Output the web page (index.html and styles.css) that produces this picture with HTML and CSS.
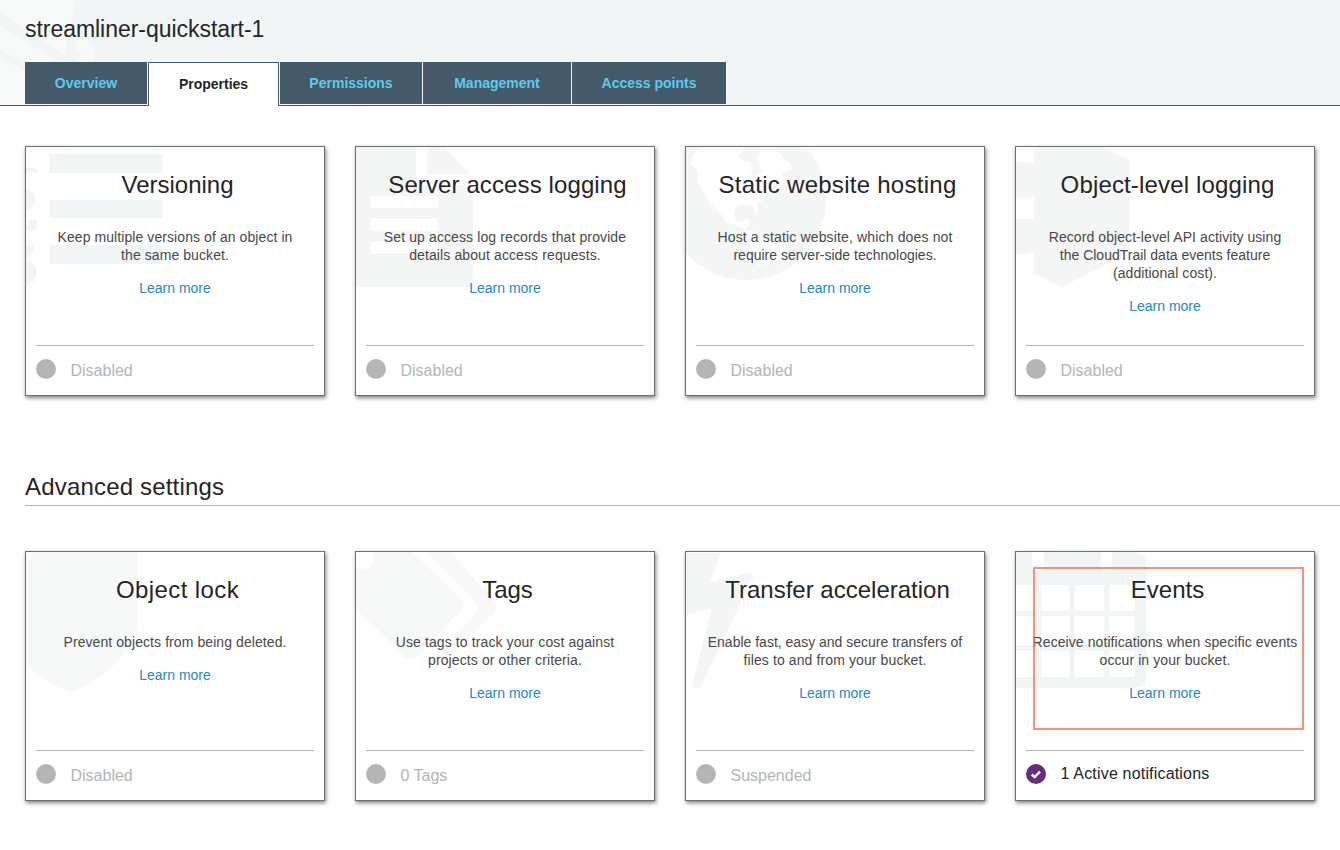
FILE: index.html
```html
<!DOCTYPE html>
<html lang="en">
<head>
<meta charset="utf-8">
<title>streamliner-quickstart-1</title>
<link rel="stylesheet" href="styles.css">
</head>
<body>
<header class="header">
  <svg class="header-mark" viewBox="0 0 330 315"><path d="M0 0H225L195 165Q180 160 165 148L0 37ZM0 75L150 172Q172 184 200 186H75V190L0 150ZM0 176L75 212V315H0Z"/><path d="M228 140Q226 116 248 114Q288 120 285 186H225Q240 178 243 160Q230 156 228 140Z"/></svg>
  <h1 class="bucket">streamliner-quickstart-1</h1>
  <nav class="tabs">
    <a class="tab t1">Overview</a>
    <a class="tab t2 active">Properties</a>
    <a class="tab t3">Permissions</a>
    <a class="tab t4">Management</a>
    <a class="tab t5">Access points</a>
  </nav>
</header>
<main class="main">
  <section class="cards">
    <article class="card">
      <svg class="mark dark" viewBox="33 36 450 450"><rect x="102" y="57" width="340" height="57" rx="6"/><rect x="102" y="194" width="340" height="56" rx="6"/><rect x="102" y="331" width="340" height="56" rx="6"/><path d="M33 98H66V113H33ZM33 163Q62 167 61 195Q60 215 33 230ZM39 255H66V285H33V270H39ZM33 331H60Q54 356 36 372Q64 382 64 413Q62 443 33 454V384L38 376L33 372Z"/></svg>
      <h2 class="title">Versioning</h2>
      <p class="desc">Keep multiple versions of an object in<br>the same bucket.</p>
      <a class="link">Learn more</a>
      <footer class="status"><span class="dot"></span>Disabled</footer>
    </article>
    <article class="card">
      <svg class="mark" viewBox="33 36 450 450"><path fill-rule="evenodd" d="M33 36H213V131Q213 150 232 150H384V456H33ZM247 36H297Q335 72 373 117H247ZM85 183Q75 183 75 193V209Q75 219 85 219H270Q280 219 280 209V193Q280 183 270 183ZM85 252Q75 252 75 262V277Q75 287 85 287H270Q280 287 280 277V262Q280 252 270 252ZM85 320Q75 320 75 330V344Q75 354 85 354H270Q280 354 280 344V330Q280 320 270 320Z"/></svg>
      <h2 class="title ls-1">Server access logging</h2>
      <p class="desc ls-1">Set up access log records that provide<br>details about access requests.</p>
      <a class="link">Learn more</a>
      <footer class="status"><span class="dot"></span>Disabled</footer>
    </article>
    <article class="card">
      <svg class="mark" viewBox="33 36 450 450"><circle cx="213" cy="195" r="240"/><path class="land" d="M62 50L88 36H205L192 62L206 80H226L233 100L226 116L238 128L250 116L262 114L256 90L246 68L256 50L285 49L318 54L326 72L352 92L346 106L316 113L336 132L314 142L296 156L270 180L263 196L244 208L250 226L244 234L232 212L206 210L182 216L176 240L186 258L202 262L212 252H222L219 272L211 286L200 278L176 268L147 262L145 246L106 204L119 240L98 196L84 170L68 142V108L45 86Z"/><path class="land" d="M211 286L239 290L256 310H300L340 336L330 362L280 386L247 391L246 350L222 326Z"/></svg>
      <h2 class="title ls-3">Static website hosting</h2>
      <p class="desc"><span class="ls-2">Host a static website, which does not</span><br><span class="ls-0">require server-side technologies.</span></p>
      <a class="link">Learn more</a>
      <footer class="status"><span class="dot"></span>Disabled</footer>
    </article>
    <article class="card">
      <svg class="mark" viewBox="33 36 450 450"><path d="M87 36H291L373 77V352L171 456L87 416V350L45 361L33 358V252H87V188H33V77L87 87Z"/></svg>
      <h2 class="title ls-2">Object-level logging</h2>
      <p class="desc">Record object-level API activity using<br><span class="ls-0">the CloudTrail data events feature</span><br>(additional cost).</p>
      <a class="link">Learn more</a>
      <footer class="status"><span class="dot"></span>Disabled</footer>
    </article>
  </section>
  <h2 class="section-title">Advanced settings</h2>
  <section class="cards">
    <article class="card">
      <svg class="mark light" viewBox="33 36 450 450"><path d="M33 36H366V256C356 340 250 432 168 456C115 440 70 410 33 373Z"/></svg>
      <h2 class="title ls-4">Object lock</h2>
      <p class="desc">Prevent objects from being deleted.</p>
      <a class="link">Learn more</a>
      <footer class="status"><span class="dot"></span>Disabled</footer>
    </article>
    <article class="card">
      <svg class="mark light" viewBox="33 36 450 450"><path d="M87 36H203L348 178Q364 195 348 213L223 346Q203 366 180 350L33 208V84Q55 94 75 80Q92 65 87 36Z"/><path d="M242 36H315L448 182Q460 200 446 218L320 344Q292 370 267 352L388 228Q406 203 386 178Z"/></svg>
      <h2 class="title">Tags</h2>
      <p class="desc ls-1">Use tags to track your cost against<br>projects or other criteria.</p>
      <a class="link">Learn more</a>
      <footer class="status"><span class="dot"></span>0 Tags</footer>
    </article>
    <article class="card">
      <svg class="mark" viewBox="33 36 450 450"><path d="M36 39H137L105 127L216 99Q235 98 234 114L77 440Q70 449 59 446Q51 442 52 431L109 207L36 222Z"/></svg>
      <h2 class="title">Transfer acceleration</h2>
      <p class="desc"><span class="ls-0">Enable fast, easy and secure transfers of</span><br><span class="ls-1">files to and from your bucket.</span></p>
      <a class="link">Learn more</a>
      <footer class="status"><span class="dot"></span>Suspended</footer>
    </article>
    <article class="card">
      <svg class="mark dark" viewBox="33 36 450 450"><path d="M33 36H395Q424 44 424 76V410Q424 443 391 443H33Z"/><path class="land" d="M81 36H117V84Q117 93 108 93H90Q81 93 81 84ZM288 36H321V84Q321 93 312 93H297Q288 93 288 84ZM33 135H92V213H33ZM108 135H192V213H108ZM210 135H297V213H210ZM313 135H390V213H313ZM33 228H92V315H33ZM108 228H192V315H108ZM210 228H297V315H210ZM313 228H390V315H313ZM33 332H92V411H33ZM108 332H192V411H108ZM210 332H297V411H210ZM313 332H390V411H313Z"/></svg>
      <h2 class="title">Events</h2>
      <p class="desc">Receive notifications when specific events<br>occur in your bucket.</p>
      <a class="link">Learn more</a>
      <footer class="status on"><svg class="check" viewBox="0 0 20 20"><circle cx="10" cy="10" r="10"/><path d="M5.8 10.5L8.7 13.1L14 7.7"/></svg><span>1 Active notifications</span></footer>
      <div class="highlight"></div>
    </article>
  </section>
</main>
</body>
</html>
```
FILE: styles.css
```css
* { box-sizing: border-box; }
body { margin: 0; height: 850px; overflow: hidden; background: #fff; color: #252525; font-family: "Liberation Sans", Arial, sans-serif; }
h1, h2, p { margin: 0; font-weight: 400; }
.header { position: relative; height: 106px; padding: 16px 0 0 25px; background: #f1f5f6; border-bottom: 1px solid #455a68; }
.header-mark { position: absolute; left: 0; top: 0; width: 110px; height: 105px; fill: #f8fafa; }
.bucket { position: relative; height: 46px; font-size: 23px; line-height: 26px; letter-spacing: -.04px; }
.tabs { position: relative; display: flex; gap: 1px; height: 44px; }
.tab { height: 42px; background: #455a68; color: #5bcbf0; font-size: 14px; font-weight: 700; line-height: 42px; text-align: center; }
.t1 { width: 122px; }
.t2 { width: 131px; }
.t3 { width: 142px; }
.t4 { width: 148px; }
.t5 { width: 154px; }
.tab.active { height: 44px; border: 1px solid #455a68; border-bottom: 0; background: #fff; color: #252525; }
.main { padding: 40px 0 0 25px; }
.cards { display: grid; grid-template-columns: repeat(4, 300px); gap: 30px; }
.card { position: relative; display: flex; flex-direction: column; height: 250px; padding: 24px 10px 0; border: 1px solid #6c7072; background: #fff; box-shadow: 1px 2px 4px rgba(0, 0, 0, .5); text-align: center; }
.mark { position: absolute; left: 0; top: 0; width: 150px; height: 150px; fill: #f4f6f6; }
.mark.dark { fill: #f1f5f6; }
.mark.light { fill: #f7f9f9; }
.mark .land { fill: #fff; }
.title { position: relative; padding-left: 5px; font-size: 24px; line-height: 28px; }
.desc { position: relative; margin: 29px -6px 0; color: #484848; font-size: 14px; line-height: 18px; letter-spacing: .08px; white-space: nowrap; }
.ls-0 { letter-spacing: 0; }
.ls-1 { letter-spacing: .11px; }
.ls-2 { letter-spacing: .15px; }
.ls-3 { letter-spacing: .27px; }
.ls-4 { letter-spacing: .4px; }
.link { position: relative; margin-top: 15px; color: #2389ce; font-size: 14px; line-height: 18px; }
.status { display: flex; gap: 14.5px; height: 50px; margin-top: auto; padding-top: 13px; border-top: 1px solid #b5b7b7; color: #b3b5b5; font-size: 16px; line-height: 24px; }
.dot { width: 20px; height: 20px; border-radius: 50%; background: #b4b6b6; }
.status.on { color: #252525; line-height: 20px; letter-spacing: .18px; }
.check { width: 20px; height: 20px; fill: #652d7c; }
.check path { fill: none; stroke: #fff; stroke-width: 2.4; }
.section-title { height: 34px; margin: 76px 0 45px; border-bottom: 1px solid #b5b7b7; font-size: 24px; line-height: 30px; letter-spacing: .18px; }
.highlight { position: absolute; left: 17px; top: 15px; width: 271px; height: 163px; border: 2px solid rgba(255, 110, 82, .78); border-radius: 1px; }
```
